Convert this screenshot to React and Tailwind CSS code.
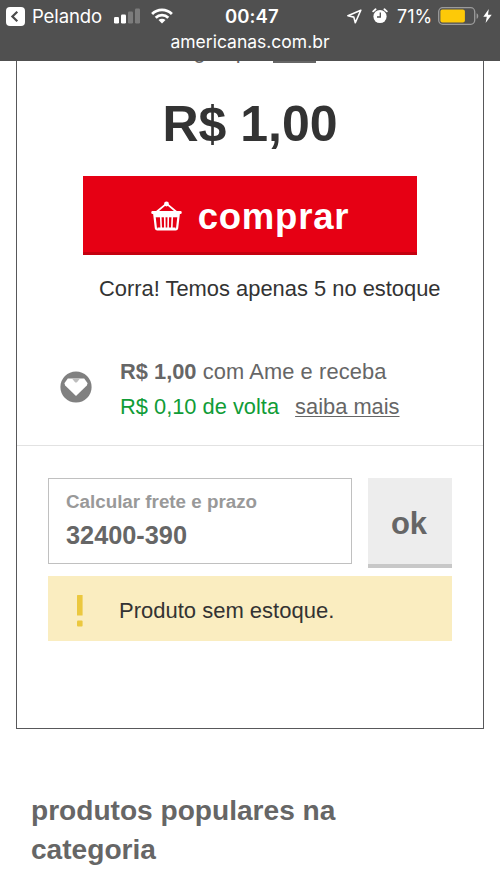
/* ─── STATUS BAR ICONS ──────────────────────────────── */
function BackIcon() {
  return (
    <svg width="19" height="19" viewBox="0 0 19 19" fill="none">
      <rect width="19" height="19" rx="4" fill="#fff" />
      <path d="M11.3 4.8 6.4 9.5l4.9 4.7" stroke="#4a4a4a" strokeWidth="2.2" />
    </svg>
  );
}

function SignalIcon() {
  return (
    <svg width="27" height="16" viewBox="0 0 27 16">
      <rect x="0" y="9" width="5" height="6.5" rx="1.2" fill="#fff" />
      <rect x="7" y="6.5" width="5" height="9" rx="1.2" fill="#fff" />
      <rect x="14" y="3.5" width="5" height="12" rx="1.2" fill="#7c7c7c" />
      <rect x="21" y="0.5" width="5" height="15" rx="1.2" fill="#7c7c7c" />
    </svg>
  );
}

function WifiIcon() {
  return (
    <svg width="22" height="16" viewBox="0 0 22 16" fill="none" stroke="#fff" strokeWidth="2.8">
      <path d="M1.1 6a14 14 0 0 1 19.8 0" />
      <path d="M4.7 9.7a8.9 8.9 0 0 1 12.6 0" />
      <path d="M11 15.6 7.5 12.1a5 5 0 0 1 7 0z" fill="#fff" stroke="none" />
    </svg>
  );
}

function LocationIcon() {
  return (
    <svg width="15" height="15" viewBox="0 0 15 15" fill="none" stroke="#fff" strokeWidth="1.6" strokeLinejoin="round">
      <path d="M13.8 1.2.9 6.8l5.9 1.3 1.5 5.6z" />
    </svg>
  );
}

function AlarmIcon() {
  return (
    <svg width="16" height="16" viewBox="0 0 16 16" fill="none">
      <circle cx="8" cy="8.5" r="6.6" fill="#fff" />
      <path d="M1.2 3.4 3.6 1.3M14.8 3.4 12.4 1.3" stroke="#fff" strokeWidth="1.8" strokeLinecap="round" />
      <path d="M8.3 4.4v4.6H5" stroke="#505050" strokeWidth="1.3" />
    </svg>
  );
}

function BatteryIcon() {
  return (
    <svg width="42" height="18" viewBox="0 0 42 18">
      <rect x="0.7" y="0.7" width="36" height="16.6" rx="4" fill="none" stroke="#9b9b9b" strokeWidth="1.3" />
      <rect x="2.4" y="2.5" width="24.5" height="13" rx="2" fill="#fdc908" />
      <path d="M38.6 6.2c2.2.8 2.2 4.8 0 5.6z" fill="#9b9b9b" />
    </svg>
  );
}

function BoltIcon() {
  return (
    <svg width="9" height="14" viewBox="0 0 9 14">
      <path d="M5.8 0 .3 7.8h3.5L2.6 14 8.7 5.8H5z" fill="#fff" />
    </svg>
  );
}

/* ─── PAGE ICONS ────────────────────────────────────── */
function BasketIcon() {
  return (
    <svg width="31" height="30" viewBox="0 0 31 30" fill="none" stroke="#fff">
      <path d="M5.4 11 15.5 2.6 25.6 11" strokeWidth="1.8" />
      <circle cx="15.5" cy="3" r="2.4" fill="#fff" stroke="none" />
      <rect x="0.3" y="10" width="30.4" height="3" rx="1.2" fill="#fff" stroke="none" />
      <path d="M3.2 12.5 4.9 27.3a1.5 1.5 0 0 0 1.4 1.2h18.4a1.5 1.5 0 0 0 1.4-1.2l1.7-14.8" strokeWidth="2.2" />
      <path d="M4 14.6h23" strokeWidth="3.4" />
      <path d="M6.5 27.5h18" strokeWidth="2" />
      <path d="m9.7 15 .5 12M13.7 15l.2 12M17.3 15l-.2 12M21.3 15l-.5 12" strokeWidth="1.6" />
    </svg>
  );
}

function AmeIcon() {
  return (
    <svg width="32" height="32" viewBox="0 0 32 32">
      <circle cx="16" cy="16" r="15.6" fill="#808080" />
      <path d="M7.8 7.6h16.4l3.4 4.6-.8 2.2L16 25 5.2 14.4l-.8-2.2z" fill="#fff" />
      <path d="M12 7.4h8l-2.8 3.6q-1.2 1-2.4 0z" fill="#bdbdbd" />
    </svg>
  );
}

function AlertIcon() {
  return (
    <svg width="6" height="32" viewBox="0 0 6 32" fill="#ebc83f">
      <rect width="5.6" height="20.5" rx="0.5" />
      <rect y="25.4" width="5.6" height="6" rx="1" />
    </svg>
  );
}

/* ─── HEADER ────────────────────────────────────────── */
function Header() {
  return (
    <header className="h-[61px] shrink-0 bg-[#505050] font-[Inter,sans-serif] text-white">
      <div className="flex h-8 items-center pl-[6px]">
        <BackIcon />
        <span className="ml-[7px] w-[82px] pt-px text-[18.5px] tracking-[-0.1px]">Pelando</span>
        <SignalIcon />
        <span className="ml-[10px]">
          <WifiIcon />
        </span>
        <span className="ml-[52px] w-[60px] pt-px text-[18.5px] font-semibold tracking-[0.1px]">00:47</span>
        <span className="ml-[62px]">
          <LocationIcon />
        </span>
        <span className="ml-[10px]">
          <AlarmIcon />
        </span>
        <span className="ml-[9px] w-[36px] text-[18px]">71%</span>
        <span className="ml-[5px]">
          <BatteryIcon />
        </span>
        <span className="ml-[3px]">
          <BoltIcon />
        </span>
      </div>
      <p className="text-center text-[17.5px] leading-5">americanas.com.br</p>
    </header>
  );
}

/* ─── PRODUCT CARD ──────────────────────────────────── */
function BuyBox() {
  return (
    <section className="mx-4 h-[668px] border border-t-0 border-[#58585a] text-[#333]">
      {/* seller line, scrolled under the header */}
      <div className="flex h-0.5 items-end overflow-hidden pl-[127px] text-[21.7px] leading-6 text-[#666]">
        <span>entregue por</span>
        <span className="ml-[6px] w-[43px] border-b-2 border-[#666] leading-5">Loja</span>
      </div>
      <p className="mt-[33px] text-center text-[50px] leading-[56px] font-bold">R$ 1,00</p>
      <button
        type="button"
        className="mx-auto mt-[24px] flex h-[79px] w-[334px] items-center justify-center gap-[16px] border-b-3 border-[#c5000f] bg-[#e60014] pt-[4px] text-[36.5px] font-bold tracking-[0.8px] text-white"
      >
        <BasketIcon />
        <span className="pt-[2px]">comprar</span>
      </button>
      <p className="mt-5 pl-[82px] text-[21.9px] leading-7">Corra! Temos apenas 5 no estoque</p>

      <div className="mt-[51px] flex items-start border-b border-[#e2e2e2] pb-[21px] pl-[43px] text-[21.85px] leading-[35px] text-[#666]">
        <span className="mt-[17px]">
          <AmeIcon />
        </span>
        <div className="ml-[28px]">
          <p className="tracking-[0.1px]">
            <strong className="tracking-normal">R$ 1,00</strong> com Ame e receba
          </p>
          <p className="flex gap-[16px]">
            <span className="text-[#109c37]">R$ 0,10 de volta</span>
            <span className="underline decoration-1 underline-offset-2">saiba mais</span>
          </p>
        </div>
      </div>

      <div className="mx-[31px] mt-8 flex items-start justify-between font-bold text-[#666]">
        <div className="flex h-[86px] w-[304px] flex-col border border-[#c0c0c0] pt-[9px] pl-[17px]">
          <span className="text-[18.8px] leading-7 text-[#999]">Calcular frete e prazo</span>
          <span className="mt-[3px] text-[25.3px] leading-8">32400-390</span>
        </div>
        <button type="button" className="h-[90px] w-[84px] border-b-4 border-[#c8c8c8] bg-[#ededed] pt-[6px] pr-[2px] text-[31px]">
          ok
        </button>
      </div>

      <div className="mx-[31px] mt-2 flex h-[65px] items-center bg-[#faedc0] pl-[29px]">
        <span className="pt-[4px]">
          <AlertIcon />
        </span>
        <span className="ml-[36px] pt-[3px] text-[22px]">Produto sem estoque.</span>
      </div>
    </section>
  );
}

export default function App() {
  return (
    <main className="flex h-[887px] w-[500px] flex-col overflow-hidden bg-white font-['Liberation_Sans',Arial,sans-serif]">
      <Header />
      <BuyBox />
      <h2 className="mt-[62px] ml-[31px] w-[340px] text-[28.1px] leading-[39px] font-bold text-[#666]">
        produtos populares na categoria
      </h2>
    </main>
  );
}
